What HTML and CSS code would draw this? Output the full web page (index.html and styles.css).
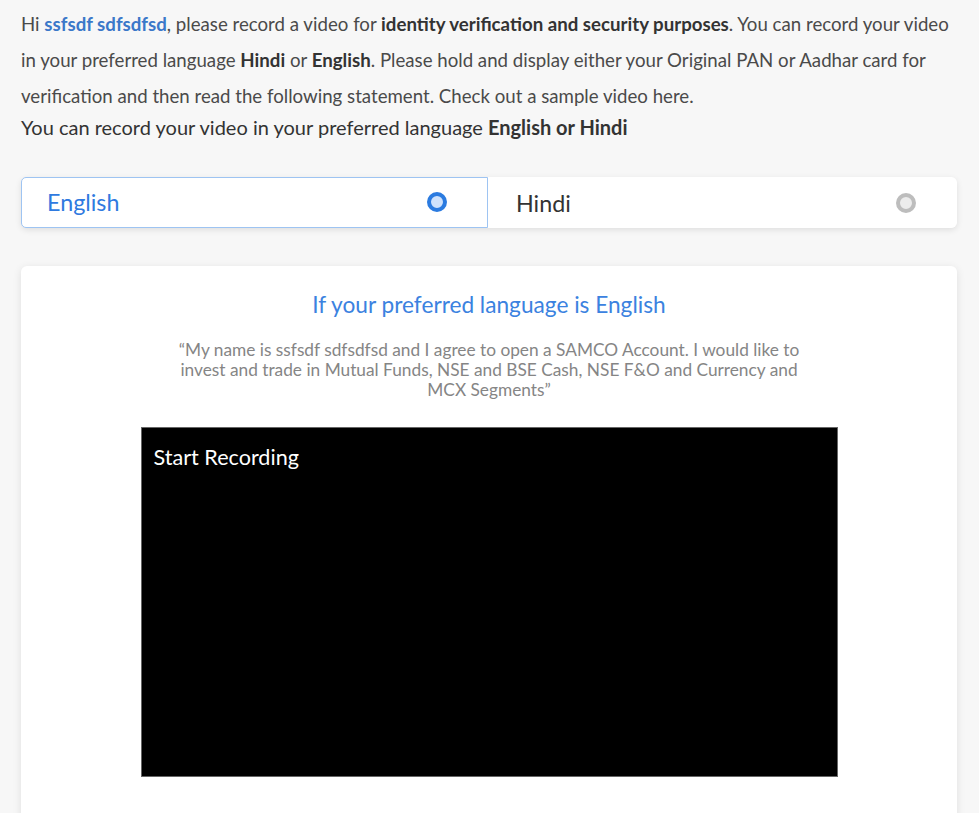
FILE: index.html
```html
<!DOCTYPE html>
<html>
<head>
<meta charset="utf-8">
<link rel="stylesheet" href="styles.css">
</head>
<body>
<div class="page">
  <p class="intro">Hi <a class="name">ssfsdf sdfsdfsd</a>, please record a video for <b>identity verification and security purposes</b>. You can record your video in your preferred language <b>Hindi</b> or <b>English</b>. Please hold and display either your Original PAN or Aadhar card for verification and then read the following statement. Check out a sample video here.</p>
  <p class="pref">You can record your video in your preferred language <b>English or Hindi</b></p>

  <div class="toggle">
    <div class="opt active"><span>English</span><span class="radio"></span></div>
    <div class="opt"><span>Hindi</span><span class="radio"></span></div>
  </div>

  <div class="card">
    <h2 class="title">If your preferred language is English</h2>
    <p class="quote">“My name is ssfsdf sdfsdfsd and I agree to open a SAMCO Account. I would like to invest and trade in Mutual Funds, NSE and BSE Cash, NSE F&amp;O and Currency and MCX Segments”</p>
    <div class="video"><span class="rec">Start Recording</span></div>
    <div class="foot">Powered by SAMCO</div>
  </div>
</div>
</body>
</html>
```
FILE: styles.css
```css
html, body {
  margin: 0;
  padding: 0;
  background: #f7f7f7;
  font-family: Lato, "Open Sans", sans-serif;
  color: #444;
  overflow: hidden;
}
.page {
  padding: 6px 22px 0 21px;
}
.intro {
  margin: 0;
  font-size: 18.67px;
  line-height: 36px;
  color: #4a4a4a;
}
.intro b { color: #333; font-weight: 700; }
.name { color: #3b78c9; font-weight: 700; }
.pref {
  margin: 0;
  font-size: 20px;
  line-height: 26px;
  color: #333;
}
.pref b { font-weight: 700; }
.toggle {
  display: flex;
  margin-top: 37px;
  height: 51px;
  box-shadow: 0 2px 6px rgba(0,0,0,0.1);
  border-radius: 6px;
}
.opt {
  flex: 1 1 0;
  display: flex;
  align-items: center;
  justify-content: space-between;
  background: #fff;
  font-size: 23.3px;
  color: #333;
  padding: 0 40px 0 27px;
  border: 1px solid transparent;
  border-radius: 0 6px 6px 0;
}
.opt.active {
  border-color: #9ec4f2;
  border-radius: 5px 0 0 5px;
  color: #2f7ae0;
  padding: 0 40px 2px 25px;
}
.radio {
  width: 12px;
  height: 12px;
  border-radius: 50%;
  border: 4px solid #bdbdbd;
  background: #ececec;
}
.active .radio {
  border-color: #2b7be0;
  background: #cfe2fc;
}
.card {
  margin-top: 38px;
  background: #fff;
  border-radius: 6px;
  box-shadow: 0 2px 8px rgba(0,0,0,0.1);
  padding: 24px 0 0;
  display: flex;
  flex-direction: column;
  align-items: center;
  min-height: 560px;
}
.title {
  margin: 0;
  font-weight: 400;
  font-size: 22.67px;
  line-height: 30px;
  color: #3b82e0;
}
.quote {
  margin: 20px 0 0;
  width: 640px;
  text-align: center;
  font-size: 17.3px;
  line-height: 20px;
  color: #858585;
}
.video {
  margin-top: 27px;
  width: 697px;
  height: 350px;
  background: #000;
  border: 1px solid #666;
  box-sizing: border-box;
  padding: 15px 12px;
}
.rec {
  color: #fff;
  font-size: 21.6px;
  line-height: 28px;
}
.foot {
  align-self: flex-end;
  margin: 34px 50px 0 0;
  font-size: 14px;
  color: #999;
}
```
